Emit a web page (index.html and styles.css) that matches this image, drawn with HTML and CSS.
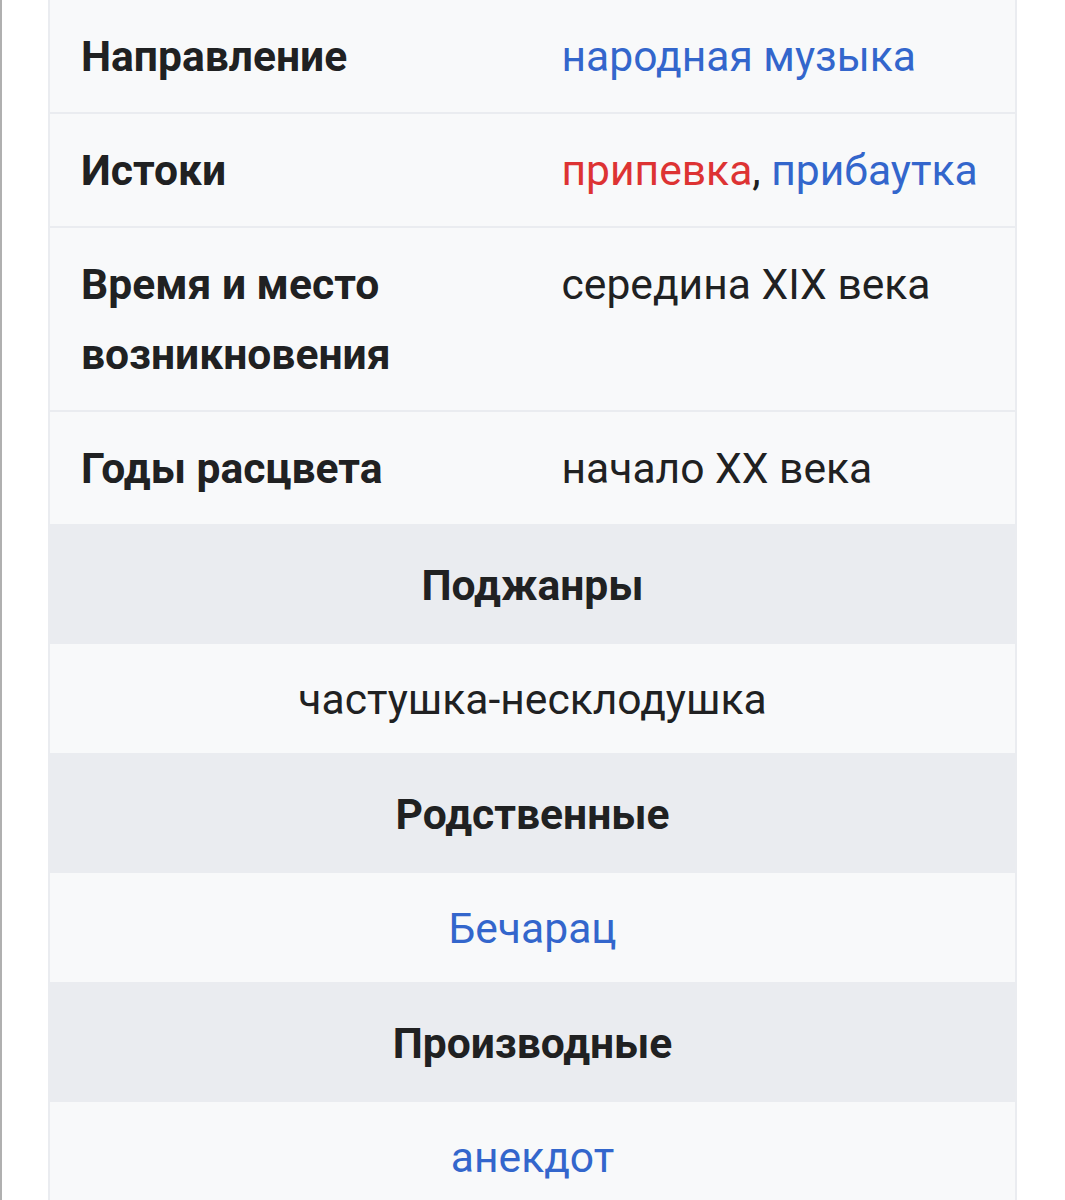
FILE: index.html
```html
<!DOCTYPE html>
<html lang="ru">
<head>
<meta charset="utf-8">
<title>Частушка</title>
<link rel="stylesheet" href="styles.css">
</head>
<body>
<div class="page">
  <table class="infobox">
    <colgroup><col class="col-label"><col class="col-value"></colgroup>
    <tbody>
      <tr class="data">
        <th class="label">Направление</th>
        <td class="value"><a class="link" href="#">народная музыка</a></td>
      </tr>
      <tr class="data">
        <th class="label">Истоки</th>
        <td class="value"><a class="link new" href="#">припевка</a>, <a class="link" href="#">прибаутка</a></td>
      </tr>
      <tr class="data">
        <th class="label">Время и место возникновения</th>
        <td class="value">середина XIX века</td>
      </tr>
      <tr class="data">
        <th class="label">Годы расцвета</th>
        <td class="value">начало XX века</td>
      </tr>
      <tr class="header"><th colspan="2">Поджанры</th></tr>
      <tr class="full"><td colspan="2">частушка-несклодушка</td></tr>
      <tr class="header"><th colspan="2">Родственные</th></tr>
      <tr class="full"><td colspan="2"><a class="link" href="#">Бечарац</a></td></tr>
      <tr class="header"><th colspan="2">Производные</th></tr>
      <tr class="full"><td colspan="2"><a class="link" href="#">анекдот</a></td></tr>
    </tbody>
  </table>
</div>
</body>
</html>
```
FILE: styles.css
```css
html, body {
  margin: 0;
  padding: 0;
  background: #ffffff;
}
body {
  font-family: Roboto, "Noto Sans", "Liberation Sans", sans-serif;
  color: #202122;
  font-size: 42.6px;
  line-height: 70px;
  overflow: hidden;
}
.page {
  border-left: 2px solid #b0b0b0;
  min-height: 1200px;
  padding-left: 46px;
  width: 969px;
}
.infobox {
  width: 969px;
  margin-top: -2px;
  border-collapse: collapse;
  table-layout: fixed;
  border: 2px solid #eaecf0;
  background: #f8f9fa;
}
.col-label { width: 50%; }
.col-value { width: 50%; }
.infobox tr {
  border-bottom: 2px solid #eaecf0;
}
.label {
  text-align: left;
  font-weight: 700;
  vertical-align: top;
  padding: 21px 31px;
}
.value {
  vertical-align: top;
  padding: 21px 32px 21px 29px;
  white-space: nowrap;
}
.header th {
  background: #eaecf0;
  font-weight: 700;
  text-align: center;
  padding: 24px 20px 22px;
}
.full td {
  text-align: center;
  padding: 20px 20px 19px;
}
.link {
  color: #3366cc;
  text-decoration: none;
}
.link.new {
  color: #dd3333;
}
```
